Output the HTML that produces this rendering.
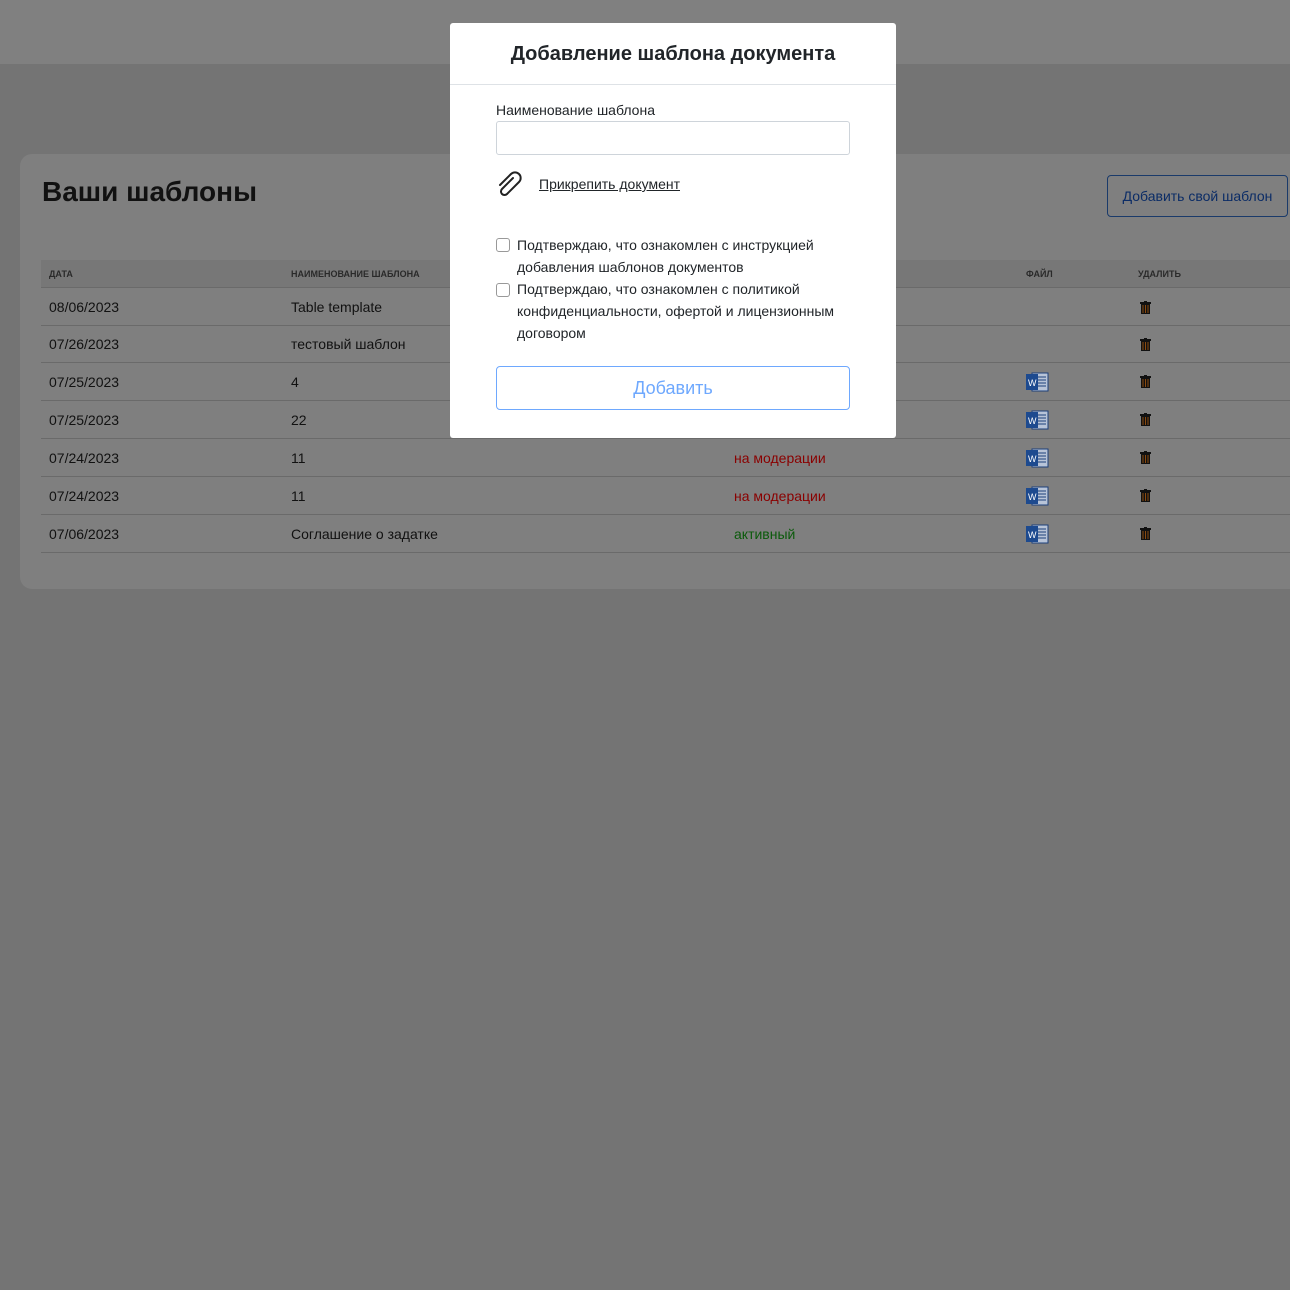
<!DOCTYPE html>
<html><head><meta charset="utf-8"><style>
*{box-sizing:border-box;margin:0;padding:0}
body{width:1290px;height:1290px;background:#747474;font-family:"Liberation Sans",sans-serif;position:relative;overflow:hidden;color:#111}
.hdr{position:absolute;left:0;top:0;width:1290px;height:64px;background:#808080}
.card{position:absolute;left:20px;top:154px;width:1290px;height:435px;background:#7f7f7f;border-radius:12px}
h1{position:absolute;left:42px;top:176px;font-size:28px;font-weight:bold;color:#111}
.btn2{position:absolute;left:1107px;top:175px;width:181px;height:42px;border:1px solid #1a3a6a;border-radius:4px;color:#0b2c66;font-size:14px;line-height:40px;text-align:center}
.th{position:absolute;left:41px;top:260px;width:1249px;height:28px;background:#777;border-bottom:1px solid #6a6a6a}
.th span{position:absolute;top:9px;font-size:9px;font-weight:bold;color:#2a2a2a}
.row{position:absolute;left:41px;width:1249px;border-bottom:1px solid #6a6a6a;font-size:14px}
.row span{position:absolute;top:50%;transform:translateY(-50%)}
.red{color:#8a0000}.grn{color:#0a5a0a}
.word{position:absolute;left:985px;width:23px;height:20px}
.trash{position:absolute;left:1099px;width:11px;height:13px}
.modal{position:absolute;left:450px;top:23px;width:446px;height:415px;background:#fff;border-radius:3px}
.mt{height:62px;border-bottom:1px solid #dee2e6;text-align:center;font-size:20px;font-weight:bold;line-height:62px;color:#212529}
.lbl{position:absolute;left:46px;top:79px;font-size:14px;color:#212529}
.inp{position:absolute;left:46px;top:98px;width:354px;height:34px;border:1px solid #ced4da;border-radius:3px}
.att{position:absolute;left:89px;top:153px;font-size:14px;text-decoration:underline;color:#212529}
.cb{position:absolute;left:46px;width:14px;height:14px;border:1px solid #999;border-radius:3px}
.ct{position:absolute;left:67px;width:340px;font-size:14px;line-height:22px;color:#212529}
.add{position:absolute;left:46px;top:343px;width:354px;height:44px;border:1px solid #6ea8fe;border-radius:4px;color:#6ea8fe;font-size:18px;text-align:center;line-height:42px}
</style></head><body>
<div class="hdr"></div>
<div class="card"></div>
<h1>Ваши шаблоны</h1>
<div class="btn2">Добавить свой шаблон</div>
<div class="th"><span style="left:8px">ДАТА</span><span style="left:250px">НАИМЕНОВАНИЕ ШАБЛОНА</span><span style="left:985px">ФАЙЛ</span><span style="left:1097px">УДАЛИТЬ</span></div>
<svg width="0" height="0" style="position:absolute"><defs>
<symbol id="w" viewBox="0 0 23 20"><rect x="6" y="1" width="16" height="18" fill="#b8c4d8" stroke="#1d3f7a"/><path d="M9 5h11M9 8h11M9 11h11M9 14h11" stroke="#1d3f7a"/><rect x="0" y="2" width="12" height="16" fill="#1d4a8f"/><text x="2" y="14" font-size="9" fill="#fff" font-family="Liberation Sans">W</text></symbol>
<symbol id="t" viewBox="0 0 11 13"><rect x="0" y="1" width="11" height="2" fill="#111"/><rect x="4" y="0" width="3" height="2" fill="#111"/><rect x="1" y="3" width="9" height="10" fill="#111"/><path d="M3 4v8M5.5 4v8M8 4v8" stroke="#8a4a10"/></symbol></defs></svg>
<div class="row" style="top:289px;height:37px"><span style="left:8px">08/06/2023</span><span style="left:250px">Table template</span><svg class="trash" style="top:12px"><use href="#t"/></svg></div>
<div class="row" style="top:326px;height:37px"><span style="left:8px">07/26/2023</span><span style="left:250px">тестовый шаблон</span><svg class="trash" style="top:12px"><use href="#t"/></svg></div>
<div class="row" style="top:363px;height:38px"><span style="left:8px">07/25/2023</span><span style="left:250px">4</span><svg class="word" style="top:9px"><use href="#w"/></svg><svg class="trash" style="top:12px"><use href="#t"/></svg></div>
<div class="row" style="top:401px;height:38px"><span style="left:8px">07/25/2023</span><span style="left:250px">22</span><svg class="word" style="top:9px"><use href="#w"/></svg><svg class="trash" style="top:12px"><use href="#t"/></svg></div>
<div class="row" style="top:439px;height:38px"><span style="left:8px">07/24/2023</span><span style="left:250px">11</span><span class="red" style="left:693px">на модерации</span><svg class="word" style="top:9px"><use href="#w"/></svg><svg class="trash" style="top:12px"><use href="#t"/></svg></div>
<div class="row" style="top:477px;height:38px"><span style="left:8px">07/24/2023</span><span style="left:250px">11</span><span class="red" style="left:693px">на модерации</span><svg class="word" style="top:9px"><use href="#w"/></svg><svg class="trash" style="top:12px"><use href="#t"/></svg></div>
<div class="row" style="top:515px;height:38px"><span style="left:8px">07/06/2023</span><span style="left:250px">Соглашение о задатке</span><span class="grn" style="left:693px">активный</span><svg class="word" style="top:9px"><use href="#w"/></svg><svg class="trash" style="top:12px"><use href="#t"/></svg></div>
<div class="modal">
<div class="mt">Добавление шаблона документа</div>
<div class="lbl">Наименование шаблона</div>
<div class="inp"></div>
<svg style="position:absolute;left:46px;top:147px" width="28" height="28" viewBox="0 0 28 28"><path d="M17 6 L6 17 a3.5 3.5 0 0 0 5 5 L23 10 a5.5 5.5 0 0 0 -8 -8 L4 13" fill="none" stroke="#222" stroke-width="2" stroke-linecap="round" transform="translate(0,2)"/></svg>
<div class="att">Прикрепить документ</div>
<div class="cb" style="top:215px"></div>
<div class="ct" style="top:211px">Подтверждаю, что ознакомлен с инструкцией добавления шаблонов документов</div>
<div class="cb" style="top:260px"></div>
<div class="ct" style="top:255px">Подтверждаю, что ознакомлен с политикой конфиденциальности, офертой и лицензионным договором</div>
<div class="add">Добавить</div>
</div>
</body></html>
